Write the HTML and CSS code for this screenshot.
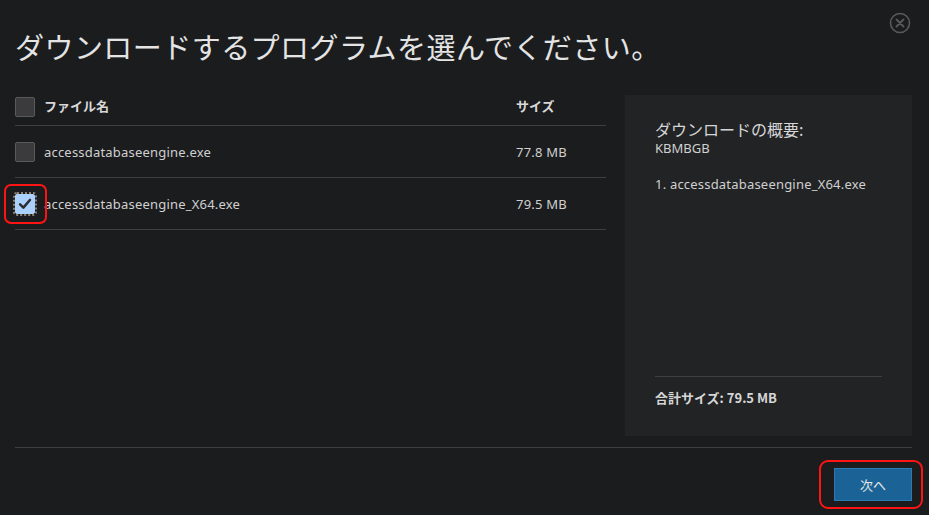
FILE: index.html
```html
<!DOCTYPE html>
<html lang="ja">
<head>
<meta charset="utf-8">
<title>ダウンロード</title>
<link rel="stylesheet" href="styles.css">
</head>
<body>
<div class="dialog">
  <header class="head">
    <h1 class="title">ダウンロードするプログラムを選んでください。</h1>
    <button class="close" aria-label="閉じる">
      <svg width="22" height="22" viewBox="0 0 22 22"><circle cx="11" cy="11" r="9.5" fill="none" stroke="#58595b" stroke-width="1.6"/><path d="M7.5 7.5 L14.5 14.5 M14.5 7.5 L7.5 14.5" stroke="#58595b" stroke-width="1.8" stroke-linecap="round"/></svg>
    </button>
  </header>
  <div class="main">
    <div class="files">
      <div class="row row-head">
        <span class="cell-name"><span class="box"></span><span class="name">ファイル名</span></span>
        <span class="size">サイズ</span>
      </div>
      <div class="row">
        <span class="cell-name"><span class="box"></span><span class="name">accessdatabaseengine.exe</span></span>
        <span class="size">77.8 MB</span>
      </div>
      <div class="row">
        <span class="cell-name"><span class="mark"><span class="box checked"><svg width="20" height="20" viewBox="0 0 20 20"><path d="M4.5 10.5 L8.2 14 L15.5 5.5" fill="none" stroke="#2b2d30" stroke-width="2.8" stroke-linecap="round" stroke-linejoin="round"/></svg></span></span><span class="name">accessdatabaseengine_X64.exe</span></span>
        <span class="size">79.5 MB</span>
      </div>
    </div>
    <aside class="summary">
      <div class="sum-top">
        <div class="sum-title">ダウンロードの概要:</div>
        <div class="sum-id">KBMBGB</div>
        <div class="sum-list">1. accessdatabaseengine_X64.exe</div>
      </div>
      <div class="sum-total">合計サイズ: 79.5 MB</div>
    </aside>
  </div>
  <footer class="foot">
    <span class="btn-ring"><button class="next">次へ</button></span>
  </footer>
</div>
</body>
</html>
```
FILE: styles.css
```css
html, body {
  margin: 0;
  padding: 0;
  background: #1b1c1e;
}
body {
  width: 929px;
  height: 515px;
  overflow: hidden;
  font-family: "Noto Sans", "Noto Sans CJK JP", sans-serif;
  color: #d4d4d4;
}
.dialog {
  padding: 0 17px 0 15px;
}
.head {
  display: flex;
  justify-content: space-between;
  align-items: flex-start;
  height: 95px;
}
.title {
  margin: 26px 0 0 0;
  font-family: "Noto Sans CJK JP", sans-serif;
  font-weight: 400;
  font-size: 29px;
  line-height: 40px;
  color: #e4e4e4;
  letter-spacing: 0.45px;
}
.close {
  margin: 12px 1px 0 0;
  padding: 0;
  border: 0;
  background: none;
  width: 22px;
  height: 22px;
  display: flex;
}
.main {
  display: flex;
  gap: 19px;
  height: 341px;
}
.files {
  width: 591px;
}
.row {
  display: flex;
  align-items: center;
  height: 51px;
  border-bottom: 1px solid #3e3f41;
  font-size: 13px;
  letter-spacing: 0.2px;
}
.row-head {
  height: 30px;
  align-items: flex-start;
  letter-spacing: 0;
}
.row-head .name, .row-head .size {
  font-family: "Noto Sans CJK JP", sans-serif;
  font-weight: 700;
  font-size: 13px;
  color: #d8d8d8;
  line-height: 20px;
  padding-top: 1px;
}
.row-head .box { margin-top: 2px; }
.row-head .cell-name { align-items: flex-start; }
.cell-name {
  display: flex;
  align-items: center;
  width: 501px;
}
.box {
  width: 18px;
  height: 18px;
  border: 1px solid #5a5a5c;
  border-radius: 2px;
  background: #3b3b3d;
  margin-right: 9px;
  flex: none;
  box-sizing: content-box;
}
.mark {
  position: relative;
  display: flex;
  margin-right: 9px;
}
.mark::after {
  content: "";
  position: absolute;
  left: -11px;
  top: -10px;
  width: 39px;
  height: 36px;
  border: 2px solid #ff1414;
  border-radius: 7px;
}
.box.checked {
  margin-right: 0;
  background: #a9d1fc;
  border-color: #a9d1fc;
  outline: 2px dotted #8c8273;
  outline-offset: 0;
  display: flex;
  align-items: center;
  justify-content: center;
}
.box.checked svg { display: block; }
.name { color: #d0d0d0; }
.size { color: #d0d0d0; }
.summary {
  width: 287px;
  background: #222325;
  padding: 24px 30px 28px 30px;
  box-sizing: border-box;
  display: flex;
  flex-direction: column;
  justify-content: space-between;
}
.sum-title {
  font-family: "Noto Sans CJK JP", sans-serif;
  font-size: 16px;
  line-height: 20px;
  color: #d6d6d6;
}
.sum-id {
  margin-top: 1px;
  font-size: 13px;
  line-height: 16px;
  color: #d0d0d0;
}
.sum-list {
  margin-top: 20px;
  font-size: 13px;
  line-height: 16px;
  color: #d0d0d0;
  letter-spacing: 0.2px;
}
.sum-total {
  border-top: 1px solid #3e3f41;
  padding-top: 11px;
  font-family: "Noto Sans CJK JP", sans-serif;
  font-weight: 700;
  font-size: 13px;
  line-height: 20px;
  color: #d6d6d6;
}
.foot {
  margin-top: 11px;
  border-top: 1px solid #3e3f41;
  display: flex;
  justify-content: flex-end;
  padding-top: 12px;
}
.btn-ring {
  display: flex;
  padding: 6px 9px 6px 13px;
  margin-right: -11px;
  border: 2px solid #ff1414;
  border-radius: 9px;
}
.next {
  width: 78px;
  height: 33px;
  border: 1px solid #2a7ab3;
  background: #1b6396;
  color: #e8e8e8;
  font-family: "Noto Sans CJK JP", sans-serif;
  font-size: 13px;
  padding: 0;
}
```
